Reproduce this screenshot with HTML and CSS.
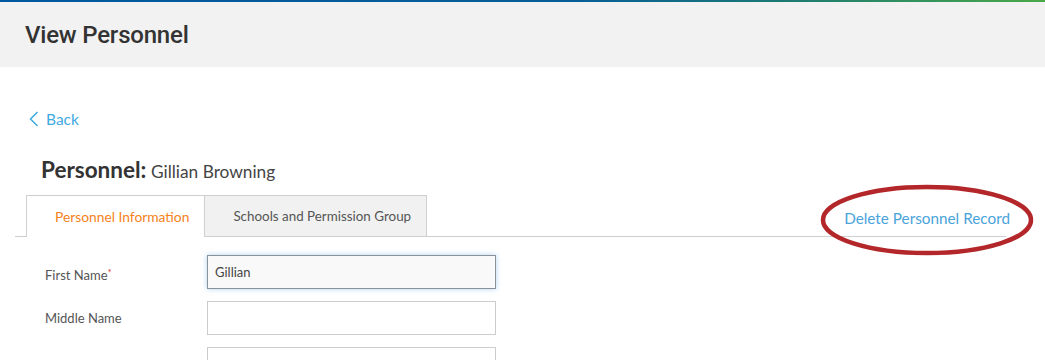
FILE: index.html
```html
<!DOCTYPE html>
<html>
<head>
<meta charset="utf-8">
<link rel="stylesheet" href="styles.css">
</head>
<body>
<div class="topbar"></div>
<header class="header"><h1 class="title">View Personnel</h1></header>
<main class="content">
  <a class="back" href="#"><svg class="chev" width="10" height="16" viewBox="0 0 10 16"><path d="M8.5 1 L1.5 8 L8.5 15" fill="none" stroke="#3fa9e2" stroke-width="1.5"/></svg><span>Back</span></a>
  <h2 class="person"><b>Personnel:</b> <span class="pname">Gillian Browning</span></h2>
  <div class="tabbar">
    <div class="tab active">Personnel Information</div>
    <div class="tab">Schools and Permission Group</div>
    <div class="spacer"></div>
    <a class="delete" href="#">Delete Personnel Record</a>
  </div>
  <form class="form">
    <div class="row"><label class="lbl lbl-req">First Name<sup class="req">*</sup></label><input class="inp focus" type="text" value="Gillian"></div>
    <div class="row"><label class="lbl">Middle Name</label><input class="inp" type="text" value=""></div>
    <div class="row"><label class="lbl"></label><input class="inp" type="text" value=""></div>
  </form>
</main>
<svg class="circle" width="220" height="76" viewBox="0 0 220 76"><ellipse cx="110" cy="38" rx="104" ry="33" fill="none" stroke="#b3262a" stroke-width="4.5"/></svg>
</body>
</html>
```
FILE: styles.css
```css
html, body { margin: 0; padding: 0; }
body {
  font-family: "Lato", "Liberation Sans", sans-serif;
  background: #fff;
  color: #333;
  width: 1045px;
  height: 360px;
  overflow: hidden;
  position: relative;
}
.topbar {
  height: 2px;
  background: linear-gradient(90deg, #0059a0 0%, #075e98 55%, #1c7a74 75%, #4aa947 100%);
}
.header {
  height: 65px;
  background: #f2f2f2;
  display: flex;
  align-items: center;
  padding-left: 25px;
}
.title {
  margin: 0;
  font-family: "Roboto", sans-serif;
  font-weight: 500;
  font-size: 24px;
  color: #333;
  letter-spacing: -0.2px;
}
.content { padding: 42px 0 0 0; }
.back {
  display: flex;
  align-items: center;
  gap: 7px;
  margin-left: 29px;
  color: #3fa9e2;
  text-decoration: none;
  font-size: 15.5px;
  height: 20px;
}
.chev { display: block; }
.person {
  margin: 29px 0 0 41px;
  font-weight: normal;
  font-size: 18px;
  color: #333;
  line-height: 24px;
}
.person b { font-size: 22.5px; font-weight: 700; }
.pname { font-size: 17.3px; color: #444; }
.tabbar {
  margin: 11px 39px 0 15px;
  padding-left: 11px;
  display: flex;
  align-items: stretch;
  border-bottom: 1px solid #cfcfcf;
  height: 41px;
}
.tab {
  display: flex;
  align-items: center;
  padding: 0 15px 0 28px;
  font-size: 13.4px;
  color: #555;
  background: #f1f1f1;
  border: 1px solid #cfcfcf;
  border-bottom: none;
}
.tab.active {
  background: #fff;
  color: #f58220;
  margin-bottom: -1px;
  border-right: none;
  font-size: 13.8px;
}
.spacer { flex: 1; }
.delete {
  align-self: center;
  margin-top: 4px;
  color: #4aa3da;
  text-decoration: none;
  font-size: 15.3px;
  margin-right: -4px;
}
.form { padding: 18px 0 0 45px; }
.row {
  display: flex;
  align-items: center;
  margin-bottom: 12px;
}
.lbl {
  width: 162px;
  font-size: 13px;
  color: #555;
}
.lbl-req { padding-top: 6px; }
.req { color: #d33; font-size: 10px; vertical-align: 4px; line-height: 0; }
.inp {
  box-sizing: border-box;
  width: 289px;
  height: 34px;
  border: 1px solid #cccccc;
  background: #fff;
  padding: 0 7px;
  font-family: inherit;
  font-size: 13px;
  color: #444;
  margin: 0;
  outline: none;
}
.inp.focus {
  background: #f9f9f9;
  border-color: #8c9196;
  box-shadow: 0 0 5px rgba(102, 175, 233, 0.55);
}
.circle {
  position: absolute;
  left: 817px;
  top: 182px;
}
```
